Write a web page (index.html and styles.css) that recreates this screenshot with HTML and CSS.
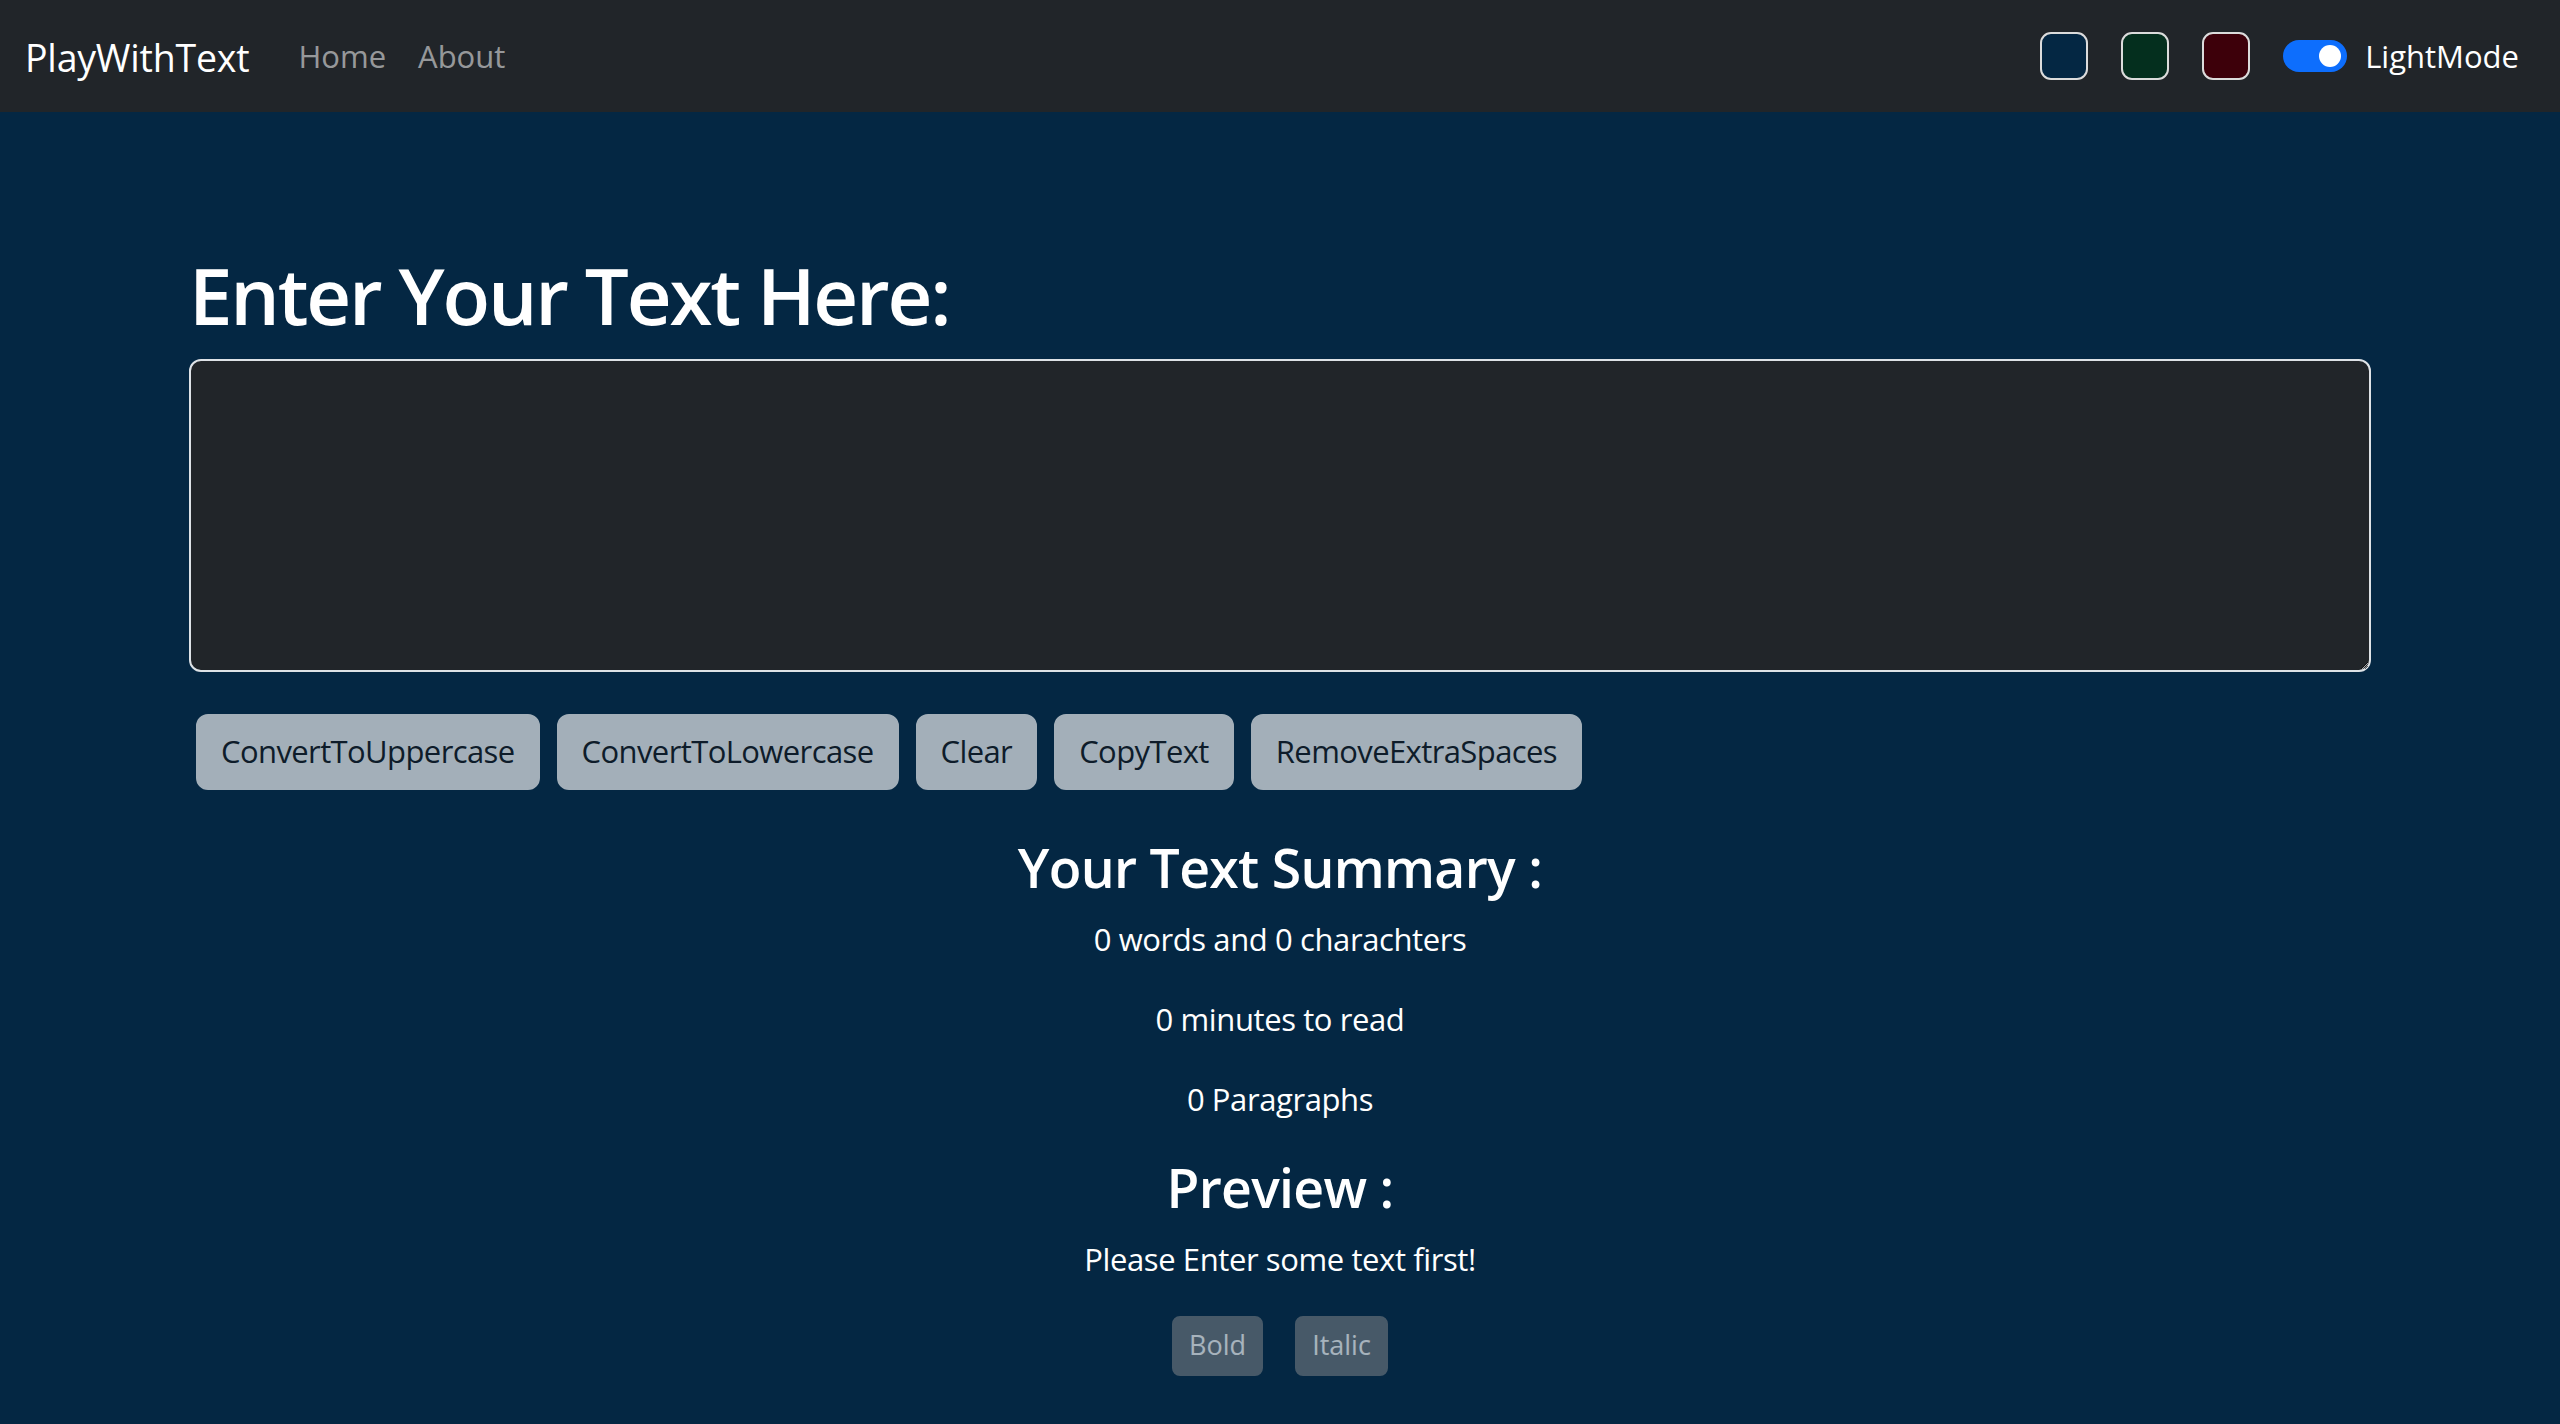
FILE: index.html
```html
<!DOCTYPE html>
<html lang="en">
<head>
<meta charset="utf-8">
<title>PlayWithText</title>
<link rel="stylesheet" href="styles.css">
</head>
<body>
<nav class="navbar">
  <div class="nav-left">
    <a class="brand" href="#">PlayWithText</a>
    <ul class="nav-links">
      <li><a class="nav-link" href="#">Home</a></li>
      <li><a class="nav-link" href="#">About</a></li>
    </ul>
  </div>
  <div class="nav-right">
    <div class="swatches">
      <button class="swatch swatch-blue" type="button"></button>
      <button class="swatch swatch-green" type="button"></button>
      <button class="swatch swatch-red" type="button"></button>
    </div>
    <label class="switch">
      <span class="track"><span class="knob"></span></span>
      <span class="switch-label">LightMode</span>
    </label>
  </div>
</nav>
<main class="container">
  <h1 class="title">Enter Your Text Here:</h1>
  <textarea class="text-box" rows="8"></textarea>
  <div class="actions">
    <button class="btn" type="button">ConvertToUppercase</button>
    <button class="btn" type="button">ConvertToLowercase</button>
    <button class="btn" type="button">Clear</button>
    <button class="btn" type="button">CopyText</button>
    <button class="btn" type="button">RemoveExtraSpaces</button>
  </div>
  <section class="summary">
    <h2 class="section-title">Your Text Summary :</h2>
    <p class="line">0 words and 0 charachters</p>
    <p class="line">0 minutes to read</p>
    <p class="line">0 Paragraphs</p>
  </section>
  <section class="preview">
    <h2 class="section-title">Preview :</h2>
    <p class="line">Please Enter some text first!</p>
    <div class="format">
      <button class="btn-sm" type="button" disabled>Bold</button>
      <button class="btn-sm" type="button" disabled>Italic</button>
    </div>
  </section>
</main>
</body>
</html>
```

FILE: styles.css
```css
* { box-sizing: border-box; }

html, body {
  margin: 0;
  padding: 0;
}

body {
  background: #042743;
  color: #ffffff;
  font-family: "Open Sans", "Noto Sans", "Liberation Sans", sans-serif;
  font-size: 32px;
  line-height: 1.5;
  min-height: 1424px;
}

/* Navbar */
.navbar {
  height: 112px;
  background: #212529;
  display: flex;
  align-items: center;
  justify-content: space-between;
  padding: 0 41px 0 25px;
}

.nav-left {
  display: flex;
  align-items: center;
}

.brand {
  color: #ffffff;
  text-decoration: none;
  font-size: 37.5px;
  line-height: 1.5;
  letter-spacing: -0.2px;
  margin-right: 33px;
  padding-top: 4px;
}

.nav-links {
  list-style: none;
  margin: 0;
  padding: 0;
  display: flex;
}

.nav-link {
  display: block;
  padding: 16px 16px;
  color: rgba(255, 255, 255, 0.55);
  text-decoration: none;
  font-size: 31px;
}

.nav-right {
  display: flex;
  align-items: center;
}

.swatches {
  display: flex;
  gap: 33px;
  margin-right: 33px;
}

.swatch {
  width: 48px;
  height: 48px;
  border: 2px solid #dcdcdc;
  border-radius: 11px;
  padding: 0;
  margin: 0;
}

.swatch-blue { background: #042743; }
.swatch-green { background: #042f1e; }
.swatch-red { background: #3d000a; }

.switch {
  display: flex;
  align-items: center;
  gap: 18px;
}

.track {
  width: 64px;
  height: 32px;
  border-radius: 16px;
  background: #0d6efd;
  display: flex;
  align-items: center;
  justify-content: flex-end;
  padding-right: 6px;
}

.knob {
  width: 22px;
  height: 22px;
  border-radius: 50%;
  background: #ffffff;
}

.switch-label {
  font-size: 31px;
  color: #ffffff;
}

/* Main */
.container {
  width: 2182px;
  margin: 0 auto;
  padding-top: 137px;
}

.title {
  margin: 0 0 16px;
  font-size: 78px;
  font-weight: 600;
  line-height: 1.2;
  letter-spacing: -2.2px;
}

.text-box {
  display: block;
  width: 100%;
  height: 313px;
  background: #212529;
  color: #ffffff;
  border: 2px solid #dee2e6;
  border-radius: 12px;
  padding: 12px 24px;
  font: inherit;
  resize: vertical;
  margin: 0;
}

.actions {
  margin-top: 42px;
  padding-left: 7px;
  display: flex;
  gap: 17px;
}

.btn {
  height: 76px;
  padding: 0 23px;
  background: #a3afb9;
  color: #0e1c2a;
  border: 2px solid #a3afb9;
  border-radius: 12px;
  font-family: inherit;
  font-size: 31px;
  line-height: 1.5;
  letter-spacing: -0.6px;
}

.summary,
.preview {
  text-align: center;
}

.section-title {
  margin: 0 0 15px;
  font-size: 53.5px;
  font-weight: 600;
  line-height: 65px;
  letter-spacing: -0.7px;
}

.summary .section-title {
  margin-top: 45px;
}

.preview .section-title {
  margin-top: 1px;
}

.line {
  margin: 0 0 32px;
  font-size: 31px;
  line-height: 48px;
  letter-spacing: -0.4px;
}

.preview .line {
  margin-bottom: 33px;
}

.format {
  display: flex;
  justify-content: center;
  gap: 32px;
}

.btn-sm {
  height: 60px;
  padding: 0 15px;
  background: #6c757d;
  border: 2px solid #6c757d;
  color: #ffffff;
  opacity: 0.65;
  border-radius: 8px;
  font-family: inherit;
  font-size: 27px;
  line-height: 1.5;
}
```
